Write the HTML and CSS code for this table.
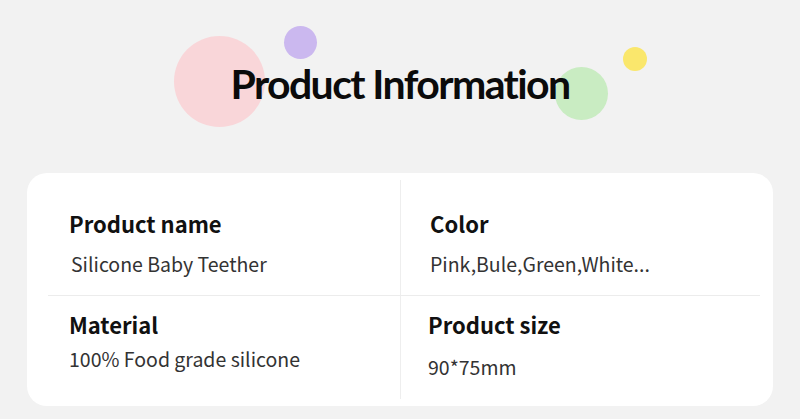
FILE: index.html
```html
<!DOCTYPE html>
<html lang="en">
<head>
<meta charset="utf-8">
<link rel="stylesheet" href="styles.css">
</head>
<body>
<header class="hero">
  <span class="dot dot-pink"></span>
  <span class="dot dot-purple"></span>
  <span class="dot dot-green"></span>
  <span class="dot dot-yellow"></span>
  <h1 class="title">Product Information</h1>
</header>
<section class="card">
  <div class="cell cell-left cell-top">
    <div class="label">Product name</div>
    <div class="value">Silicone Baby Teether</div>
  </div>
  <div class="cell cell-right cell-top">
    <div class="label">Color</div>
    <div class="value">Pink,Bule,Green,White...</div>
  </div>
  <div class="rule"></div>
  <div class="cell cell-left cell-bottom">
    <div class="label">Material</div>
    <div class="value value-tight">100% Food grade silicone</div>
  </div>
  <div class="cell cell-right cell-bottom">
    <div class="label">Product size</div>
    <div class="value value-loose">90*75mm</div>
  </div>
</section>
</body>
</html>
```
FILE: styles.css
```css
* { box-sizing: border-box; }
html, body {
  margin: 0;
  padding: 0;
}
body {
  width: 800px;
  height: 419px;
  overflow: hidden;
  background: #f2f2f2;
  font-family: "Noto Sans CJK SC", "Noto Sans", sans-serif;
}
.hero {
  position: relative;
  height: 173px;
  display: flex;
  justify-content: center;
}
.dot {
  position: absolute;
  border-radius: 50%;
}
.dot-pink { left: 174px; top: 36px; width: 91px; height: 91px; background: #f9d6d9; }
.dot-purple { left: 284px; top: 26px; width: 33px; height: 33px; background: #cbb8ef; }
.dot-green { left: 555px; top: 67px; width: 53px; height: 53px; background: #c9ecc2; }
.dot-yellow { left: 623px; top: 47px; width: 24px; height: 24px; background: #fae76c; }
.title {
  position: relative;
  margin: 0;
  padding-top: 62px;
  font-family: "Lato", "Liberation Sans", sans-serif;
  font-weight: 700;
  font-size: 41px;
  line-height: 44px;
  letter-spacing: -1.6px;
  color: #0b0b0b;
}
.card {
  margin-left: 27px;
  width: 746px;
  background: #ffffff;
  border-radius: 20px;
  padding: 7px 0;
  display: grid;
  grid-template-columns: 374px 1fr;
}
.cell-left {
  border-right: 1px solid #eeeeee;
  padding-left: 42px;
}
.cell-right {
  padding-left: 29px;
}
.cell-top { padding-top: 31px; padding-bottom: 20px; }
.cell-bottom { padding-top: 16px; padding-bottom: 21px; }
.cell-right.cell-bottom { padding-left: 27px; }
.rule {
  grid-column: 1 / -1;
  height: 1px;
  margin: 0 13px 0 21px;
  background: #ececec;
}
.label {
  font-size: 22px;
  line-height: 24px;
  font-weight: 700;
  color: #111111;
}
.value {
  margin-top: 18px;
  font-size: 19.5px;
  line-height: 22px;
  color: #333333;
}
.cell-left .value { padding-left: 2px; }
.cell-left .value-tight { margin-top: 12px; padding-left: 0; }
.value-loose { margin-top: 20px; }
```
